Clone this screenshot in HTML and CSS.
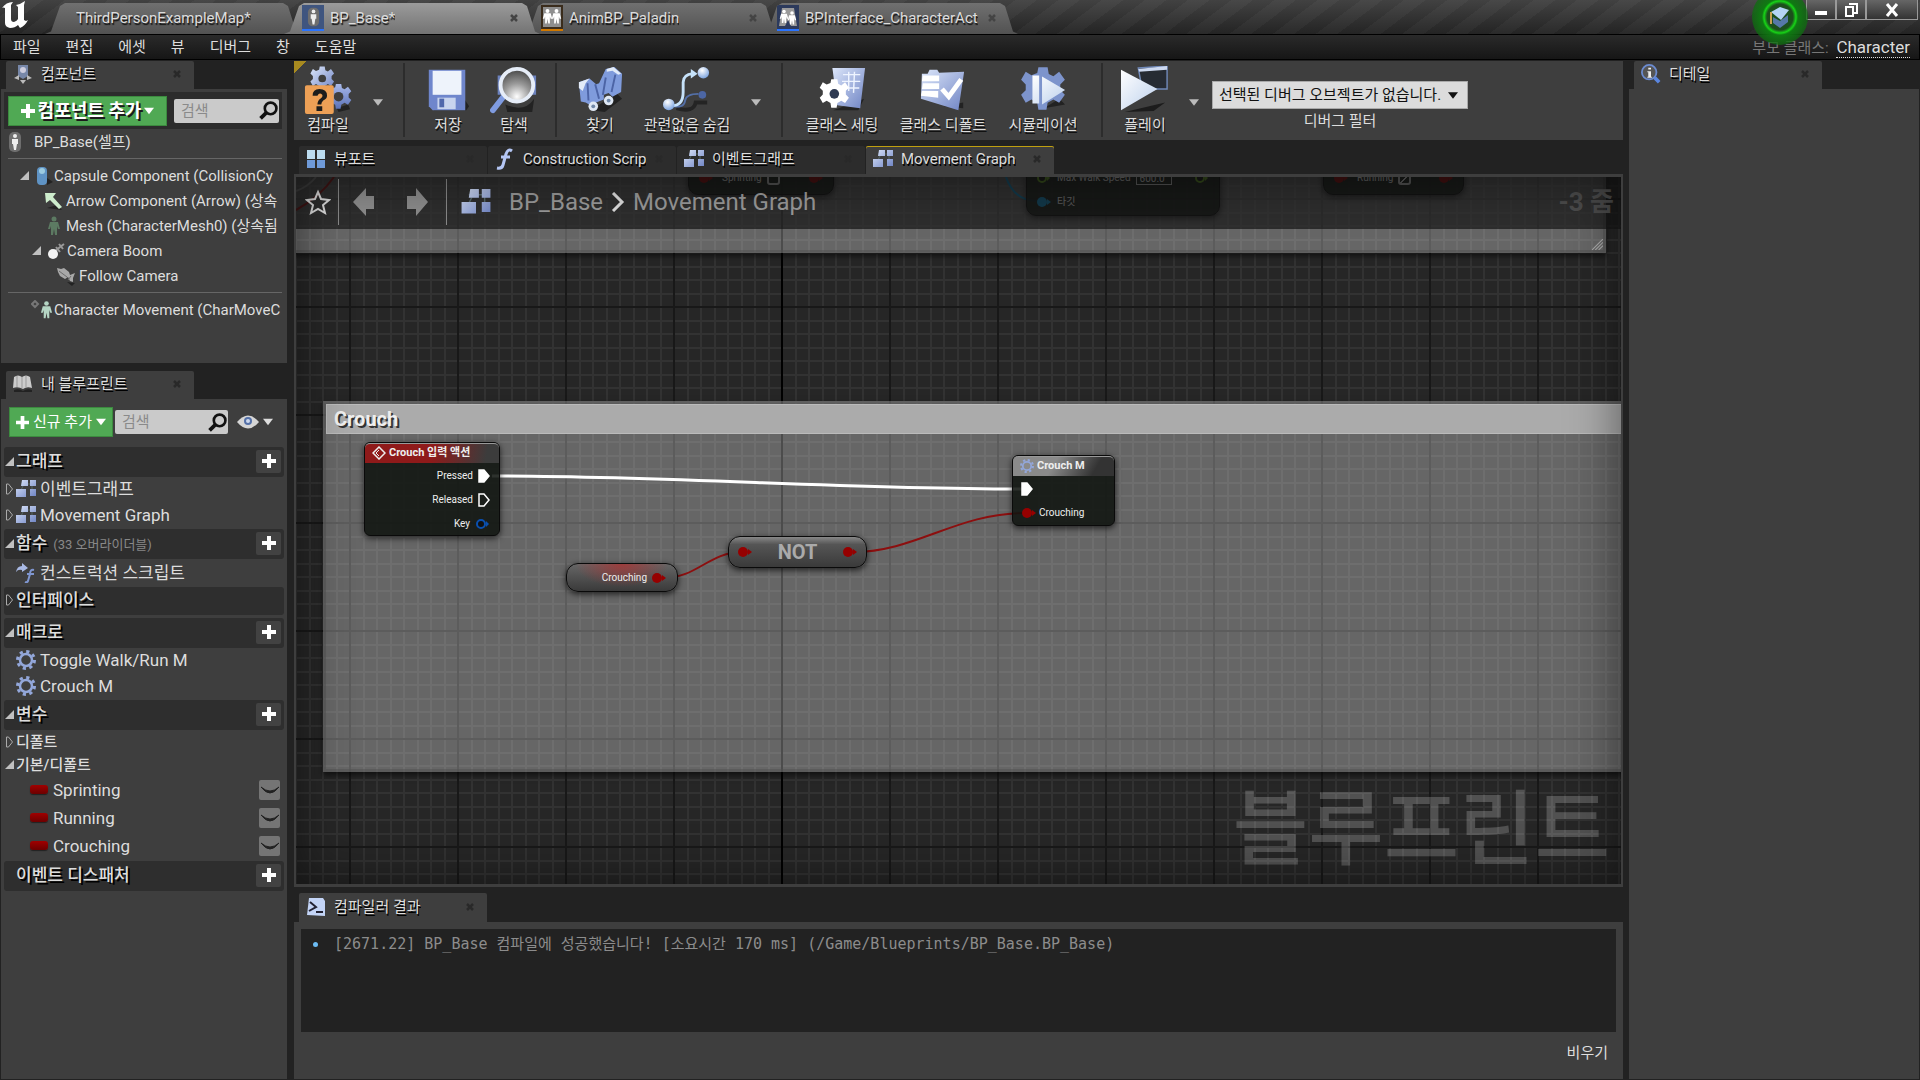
FILE: index.html
```html
<!DOCTYPE html>
<html lang="ko">
<head>
  <meta charset="UTF-8">
  <title>BP_Base</title>
  <link rel="stylesheet" href="styles.css">
</head>
<body>

  <!-- shared icons -->
  <svg class="defs" aria-hidden="true">
    <defs>
      <linearGradient id="blue" x1="0" y1="0" x2="1" y2="1">
        <stop offset="0" stop-color="#dce6fa"/><stop offset="1" stop-color="#6f84c4"/>
      </linearGradient>
      <linearGradient id="blue2" x1="0" y1="0" x2="0" y2="1">
        <stop offset="0" stop-color="#a9baea"/><stop offset="1" stop-color="#5b72b8"/>
      </linearGradient>
      <linearGradient id="white" x1="0" y1="0" x2="1" y2="1">
        <stop offset="0" stop-color="#ffffff"/><stop offset="1" stop-color="#bcd0ec"/>
      </linearGradient>
      <radialGradient id="ball" cx=".4" cy=".3" r=".7">
        <stop offset="0" stop-color="#fff"/><stop offset="1" stop-color="#7fa6e0"/>
      </radialGradient>
      <radialGradient id="lens" cx=".5" cy=".85" r=".9">
        <stop offset="0" stop-color="#fff"/><stop offset=".45" stop-color="#999"/><stop offset="1" stop-color="#3a3a3a"/>
      </radialGradient>
      <symbol id="graph" viewBox="0 0 20 18">
        <path d="M5 4h14M16 4v11M3 14l4-8" stroke="#566" fill="none"/>
        <path d="M6 0h6v6H5zM14 0h6v6h-6zM0 9h10v8H0zM14 9h6v7h-6z" fill="url(#blue)"/>
      </symbol>
      <symbol id="gear" viewBox="0 0 20 20">
        <circle cx="10" cy="10" r="6" fill="none" stroke="#93a7da" stroke-width="2.500"/>
        <circle cx="10" cy="10" r="8.5" fill="none" stroke="#93a7da" stroke-width="3" stroke-dasharray="3.2 3.47"/>
      </symbol>
      <symbol id="cog" viewBox="0 0 40 40">
        <path d="M16 1h8l1 6 4 2 5-4 5 7-4 4v5l4 4-5 7-5-3-5 3-1 6h-7l-1-6-5-3-5 3-4-7 4-4v-5l-4-4 4-7 5 3 5-2z"/>
      </symbol>
      <symbol id="mag" viewBox="0 0 18 18">
        <circle cx="11" cy="7" r="5.5" fill="none" stroke="#111" stroke-width="2.5"/>
        <path d="M7 11l-5.500 5.500" stroke="#111" stroke-width="3.500"/>
      </symbol>
      <symbol id="plus" viewBox="0 0 14 14"><path d="M5 0h4v5h5v4H9v5H5V9H0V5h5z" fill="#fff"/></symbol>
      <symbol id="down" viewBox="0 0 12 8"><path d="M0 0h12L6 8z" fill="currentColor"/></symbol>
      <symbol id="open" viewBox="0 0 10 10"><path d="M10 0v10H0z" fill="#c0c0c0"/></symbol>
      <symbol id="shut" viewBox="0 0 8 12"><path d="M1 1v10l2 0 4-5-4-5z" fill="none" stroke="#aaa"/></symbol>
      <symbol id="close" viewBox="0 0 8 8"><path d="M1 1l6 6M7 1L1 7" stroke="currentColor" stroke-width="2.500"/></symbol>
      <symbol id="man" viewBox="0 0 14 20">
        <circle cx="7" cy="3" r="2.500"/><path d="M3 6h8l2 7h-2l-1-3v9H8l-1-6-1 6H4v-9l-1 3H1z"/>
      </symbol>
      <symbol id="capsule" viewBox="0 0 14 20">
        <rect x="1" width="12" height="20" rx="5" fill="#6e6e6e"/><circle cx="7" cy="4" r="2" fill="#eee"/>
        <path d="M4 7h6v5H9l-1 6H6l-1-6H4z" fill="#eee"/>
      </symbol>
      <symbol id="eye" viewBox="0 0 18 12">
        <path d="M0 3q9 8 18 0-9 12-18 0z" fill="#222" stroke="#222"/>
      </symbol>
      <symbol id="exec" viewBox="0 0 12 14"><path d="M1 1h5l5 6-5 6H1z" stroke="#fff" stroke-width="1.500"/></symbol>
      <symbol id="pin" viewBox="0 0 16 12"><circle cx="6" cy="6" r="5"/><path d="M11 3l4 3-4 3z"/></symbol>
      <symbol id="ring" viewBox="0 0 16 12"><circle cx="6" cy="6" r="4" fill="#111" stroke="currentColor" stroke-width="2"/><path d="M11 3l3 3-3 3z" fill="currentColor"/></symbol>
      <pattern id="grid" width="108" height="108" patternUnits="userSpaceOnUse" x="53" y="21">
        <rect width="108" height="108" fill="#262626"/>
        <path d="M14 0h2v108h-2zM27 0h2v108h-2zM41 0h2v108h-2zM54 0h2v108h-2zM68 0h2v108h-2zM81 0h2v108h-2zM95 0h2v108h-2z
                 M0 14h108v2H0zM0 27h108v2H0zM0 41h108v2H0zM0 54h108v2H0zM0 68h108v2H0zM0 81h108v2H0zM0 95h108v2H0z" fill="#323232"/>
        <path d="M0 0h108v2H0zM0 0h2v108H0z" fill="#181818"/>
      </pattern>
    </defs>
  </svg>

  <header class="titlebar">
    <svg class="logo" viewBox="0 0 26 28"><path d="M0 7Q4 1 11 1L9 4v14q0 3 3 3 3-1 4-3V6L14 4q5-1 9-4l-1 4v15l2 1 2-1q-3 6-8 8l-2-3q-3 3-8 3-5-1-5-5V7q-2-1-3 0z" fill="#fff"/></svg>
    <nav class="file-tabs">
      <button class="file-tab plain"><span>ThirdPersonExampleMap*</span></button>
      <button class="file-tab current">
        <svg width="22" height="26" viewBox="0 0 22 26"><path d="M0 0h22v24H0z" fill="#3f557f"/><path d="M0 24h22v2H0z" fill="#2a74ff"/><use href="#capsule" x="5" y="2" width="13" height="20"/></svg>
        <span>BP_Base*</span><svg class="x"><use href="#close"/></svg>
      </button>
      <button class="file-tab">
        <svg width="22" height="26" viewBox="0 0 22 26"><path d="M0 0h22v24H0z" fill="#3a2c1c"/><path d="M2 2h18v20H2z" fill="#8e8e8e"/><g fill="#fff"><use href="#man" x="1" y="2" width="11" height="19"/><use href="#man" x="10" y="2" width="11" height="19"/></g><path d="M0 24h22v2H0z" fill="#d07800"/></svg>
        <span>AnimBP_Paladin</span><svg class="x"><use href="#close"/></svg>
      </button>
      <button class="file-tab last">
        <svg width="22" height="26" viewBox="0 0 22 26"><path d="M0 0h22v24H0z" fill="#2c3a5c"/><path d="M5 3h12l3 18h-6l-3-6-3 6H2z" fill="#9a9a9a"/><g fill="#fff"><use href="#man" x="2" y="2" width="10" height="19"/><use href="#man" x="10" y="4" width="10" height="18"/></g><path d="M0 24h22v2H0z" fill="#2a74ff"/></svg>
        <span>BPInterface_CharacterAct</span><svg class="x"><use href="#close"/></svg>
      </button>
    </nav>
    <button class="tutorial" aria-label="튜토리얼">
      <svg viewBox="0 0 24 24"><path d="M5 12l7 4 8-6v7l-8 6-7-5z" fill="#5678a8"/><path d="M3 7l9-5 9 3-8 10z" fill="#b4d4f4"/><path d="M3 7v12" stroke="#c8a050" stroke-width="2"/></svg>
    </button>
    <div class="window-buttons">
      <button aria-label="최소화"><svg viewBox="0 0 14 14"><path d="M1 8h12v4H1z" fill="#fff"/></svg></button>
      <button aria-label="복원"><svg viewBox="0 0 14 14"><path d="M5 1h8v9h-3M2 4h7v9H2z" fill="none" stroke="#fff" stroke-width="2"/></svg></button>
      <button class="wide" aria-label="닫기"><svg viewBox="0 0 14 14"><path d="M2 1l10 12M12 1L2 13" stroke="#fff" stroke-width="3"/></svg></button>
    </div>
  </header>

  <div class="menubar">
    <button>파일</button><button>편집</button><button>에셋</button><button>뷰</button><button>디버그</button><button>창</button><button>도움말</button>
    <p class="parent">부모 클래스: <a href="#">Character</a></p>
  </div>

  <div class="workspace">
    <aside class="left">
      <button class="dock-tab">
        <svg width="20" height="20" viewBox="0 0 20 20"><path d="M5 1h10v11l-5 3-5-3z" fill="#7787a8"/><circle cx="10" cy="6" r="3" fill="#ccd"/><path d="M1 14l5-3v5zM19 14l-5-3v5zM10 20l-3-4h6z" fill="#bbb"/></svg>
        <span>컴포넌트</span><svg class="x"><use href="#close"/></svg>
      </button>
      <section class="panel components">
        <div class="add-row">
          <button class="green big"><svg width="14" height="14"><use href="#plus"/></svg>컴포넌트 추가<svg width="10" height="8"><use href="#down"/></svg></button>
          <label class="search"><input type="text" placeholder="검색" aria-label="컴포넌트 검색"><svg><use href="#mag"/></svg></label>
        </div>
        <div class="comp self"><svg width="14" height="20"><use href="#capsule"/></svg><span>BP_Base(셀프)</span></div>
        <hr>
        <div class="comp d1"><svg class="tri"><use href="#open"/></svg><svg width="18" height="20" viewBox="0 0 18 20"><path d="M12 12l6 4-6 3z" fill="#222"/><rect x="2" y="1" width="10" height="18" rx="4" fill="#5f93c4"/><circle cx="7" cy="5" r="3" fill="#9ccbe0"/></svg><span>Capsule Component (CollisionCy</span></div>
        <div class="comp d2"><svg width="20" height="20" viewBox="0 0 20 20"><path d="M3 17l15 2-5-5z" fill="#222"/><path d="M1 2h11L9 6l9 10-3 2-9-9-4 3z" fill="#cdeccc"/></svg><span>Arrow Component (Arrow) (상속</span></div>
        <div class="comp d2"><svg width="20" height="20" viewBox="0 0 20 20" fill="#5c7a62"><use href="#man" x="3" width="14" height="20"/></svg><span>Mesh (CharacterMesh0) (상속됨</span></div>
        <div class="comp d3"><svg class="tri"><use href="#open"/></svg><svg width="20" height="20" viewBox="0 0 20 20"><path d="M8 10l9-7M9 6l4 5M12 3l4 5" stroke="#999" stroke-width="2"/><circle cx="6" cy="13" r="5" fill="#f2f2f2"/></svg><span>Camera Boom</span></div>
        <div class="comp d4"><svg width="20" height="20" viewBox="0 0 20 20"><path d="M11 16l8 1-3 3z" fill="#222"/><path d="M1 2l4 1 3-1 5 4 1 3 5-2-2 5v4l-3-1-2-4-3 2-5-3-2-4z" fill="#a8a8a8"/><path d="M3 5l8 6M12 14l3-4" stroke="#6c6c6c"/></svg><span>Follow Camera</span></div>
        <hr>
        <div class="comp d5"><svg width="22" height="20" viewBox="0 0 22 20"><path d="M4 1l3 3-3 3-3-3z" fill="none" stroke="#777" stroke-width="2"/><g fill="#b5d5c4"><use href="#man" x="9" width="13" height="20"/></g></svg><span>Character Movement (CharMoveC</span></div>
      </section>

      <button class="dock-tab">
        <svg width="20" height="20" viewBox="0 0 20 20"><path d="M1 3q4-3 8 0 4-3 8 0l2 11q-5-2-9 1-5-3-10-1z" fill="#ccc"/><path d="M9 3v11M4 2v11M13 2v11" stroke="#999"/><path d="M1 16q5-2 9 1 4-3 9-1v2H1z" fill="#222"/></svg>
        <span>내 블루프린트</span><svg class="x"><use href="#close"/></svg>
      </button>
      <section class="panel blueprint">
        <div class="bp-tools">
          <button class="green"><svg width="13" height="13"><use href="#plus"/></svg>신규 추가<svg width="10" height="8"><use href="#down"/></svg></button>
          <label class="search"><input type="text" placeholder="검색" aria-label="블루프린트 검색"><svg><use href="#mag"/></svg></label>
          <button class="view" aria-label="보기 옵션"><svg width="22" height="14" viewBox="0 0 22 14"><path d="M0 7q11-13 22 0-11 13-22 0z" fill="#d5d5d5"/><circle cx="11" cy="6" r="4" fill="#5470a8"/><circle cx="11" cy="6" r="2" fill="#ccd8ee"/></svg><svg width="10" height="8"><use href="#down"/></svg></button>
        </div>
        <h3><svg class="tri"><use href="#open"/></svg>그래프<button aria-label="그래프 추가"><svg><use href="#plus"/></svg></button></h3>
        <div class="item"><svg class="arrow"><use href="#shut"/></svg><svg width="20" height="18"><use href="#graph"/></svg>이벤트그래프</div>
        <div class="item"><svg class="arrow"><use href="#shut"/></svg><svg width="20" height="18"><use href="#graph"/></svg>Movement Graph</div>
        <h3><svg class="tri"><use href="#open"/></svg>함수<small>(33 오버라이더블)</small><button aria-label="함수 추가"><svg><use href="#plus"/></svg></button></h3>
        <div class="item tall"><svg class="arrow"></svg><svg width="20" height="20" viewBox="0 0 20 20"><path d="M0 9q1-6 6-6V0l6 5-6 4V7q-4-1-6 2z" fill="#a9b9e4"/><path d="M18 7q-4-1-4 4l-2 7q-1 2-3 1M11 11h7" fill="none" stroke="#7f96d0" stroke-width="2"/></svg>컨스트럭션 스크립트</div>
        <h3 class="short"><svg class="arrow"><use href="#shut"/></svg>인터페이스</h3>
        <h3><svg class="tri"><use href="#open"/></svg>매크로<button aria-label="매크로 추가"><svg><use href="#plus"/></svg></button></h3>
        <div class="item"><svg class="arrow"></svg><svg width="20" height="20"><use href="#gear"/></svg>Toggle Walk/Run M</div>
        <div class="item"><svg class="arrow"></svg><svg width="20" height="20"><use href="#gear"/></svg>Crouch M</div>
        <h3><svg class="tri"><use href="#open"/></svg>변수<button aria-label="변수 추가"><svg><use href="#plus"/></svg></button></h3>
        <h4><svg class="arrow"><use href="#shut"/></svg>디폴트</h4>
        <h4><svg class="tri"><use href="#open"/></svg>기본/디폴트</h4>
        <div class="var"><i></i>Sprinting<button aria-label="Sprinting 공개"><svg><use href="#eye"/></svg></button></div>
        <div class="var"><i></i>Running<button aria-label="Running 공개"><svg><use href="#eye"/></svg></button></div>
        <div class="var"><i></i>Crouching<button aria-label="Crouching 공개"><svg><use href="#eye"/></svg></button></div>
        <h3><svg class="tri"></svg>이벤트 디스패처<button aria-label="디스패처 추가"><svg><use href="#plus"/></svg></button></h3>
      </section>
    </aside>

    <main class="center">
      <div class="toolbar">
        <button class="tool compile">
          <svg viewBox="0 0 50 50"><path d="M34 44l12-4 2 5-12 3z" fill="#222"/><use href="#cog" x="6" y="0" width="26" height="26" fill="url(#blue)"/><circle cx="19" cy="13" r="4" fill="#3e3e3e"/><use href="#cog" x="22" y="17" width="28" height="30" fill="url(#blue2)"/><circle cx="36" cy="32" r="5" fill="#3e3e3e"/><rect x="1" y="20" width="30" height="30" rx="2" fill="#eda056"/><path d="M9 31q0-7 7-7 8 0 8 7 0 3-4 5-2 2-2 4h-4q0-4 3-6 3-2 2-4-3-3-5 1zM13 42h6v5h-6z" fill="#1c1c1c"/></svg>
          컴파일
        </button>
        <button class="more" aria-label="컴파일 옵션"><svg><use href="#down"/></svg></button>
        <span class="sep"></span>
        <button class="tool w68">
          <svg viewBox="0 0 50 50"><path d="M10 46h34l3-4-4-6z" fill="#222"/><path d="M5 4h38v42H9l-4-4z" fill="#6f86cc"/><path d="M9 5h30v25H9z" fill="#eef3fb"/><path d="M14 33h19v12H14z" fill="#c8d4ee"/><path d="M16 34h5v9h-5z" fill="#5068ac"/></svg>
          저장
        </button>
        <button class="tool w62">
          <svg viewBox="0 0 50 50"><path d="M16 40q20 9 30-6l-2 14H18z" fill="#222"/><path d="M8 10h10v20H8zM40 10h8v20h-8z" fill="#6c82be"/><path d="M14 32L3 46" stroke="#7f9be0" stroke-width="6" stroke-linecap="round"/><circle cx="28" cy="20" r="17" fill="url(#lens)" stroke="#e6edf8" stroke-width="4"/></svg>
          탐색
        </button>
        <span class="sep"></span>
        <button class="tool w68">
          <svg viewBox="0 0 50 50"><path d="M16 46l14 2 18-14-6-6z" fill="#222"/><path d="M3 17l11-4 7 6 3-1 7-15 9-2 8 7-1 19-9 5-4-4-5 2 0 5-8 3-6 3-5-3-5-1z" fill="#7f9bdc"/><path d="M32 3l7-2 8 7-3 1-6-4-6 1zM3 17l11-4-4 5-3 8-4-3z" fill="#e2ebf8"/><path d="M20 19l4 15M31 12l-3 18M41 9l-4 18M12 18l1 18" stroke="#4c64a6" stroke-width="2"/><circle cx="18" cy="42" r="5" fill="#dfe8f4"/><circle cx="18" cy="42" r="2" fill="#7088a8"/><circle cx="34" cy="36" r="5" fill="#dfe8f4"/><circle cx="34" cy="36" r="2" fill="#7088a8"/></svg>
          찾기
        </button>
        <button class="tool w106">
          <svg viewBox="0 0 50 50"><path d="M14 44q18 5 20-6h12" stroke="#242424" stroke-width="4" fill="none"/><path d="M7 41q15 4 16-5 1-7 14-7" stroke="#5470a8" stroke-width="2" fill="none"/><path d="M7 41q14 2 14-14V17q0-8 10-9" stroke="#c6e2fa" stroke-width="3" fill="none"/><path d="M29 3l7 5-7 5z" fill="#c6e2fa"/><circle cx="42" cy="7" r="6" fill="url(#ball)"/><circle cx="6" cy="40" r="6" fill="url(#ball)"/><circle cx="41" cy="30" r="4" fill="#4c66a4"/></svg>
          관련없음 숨김
        </button>
        <button class="more" aria-label="숨김 옵션"><svg><use href="#down"/></svg></button>
        <span class="sep"></span>
        <button class="tool w100">
          <svg viewBox="0 0 50 50"><path d="M16 46h26l6-12z" fill="#222"/><path d="M15 2h34l-5 42-24-3z" fill="url(#blue)"/><path d="M26 9h18M25 16h19M25 23h18M32 6v20M38 6l-1 22" stroke="#eef4ff" stroke-width="1.500"/><use href="#cog" x="0" y="13" width="34" height="32" fill="#fff"/><circle cx="17" cy="29" r="5" fill="#2e3a52"/></svg>
          클래스 세팅
        </button>
        <button class="tool w102">
          <svg viewBox="0 0 50 50"><path d="M26 42l20-4 0 6z" fill="#222"/><path d="M3 8h6l2-4h8l2 3 26-1-6 40L2 34z" fill="url(#blue)"/><path d="M4 10h17v6H3zM4 18h17v6H3zM3 26h17v7L2 31z" fill="#fff"/><path d="M24 24l7 8 13-18" stroke="#fff" stroke-width="5" fill="none"/></svg>
          클래스 디폴트
        </button>
        <button class="tool w98">
          <svg viewBox="0 0 50 50"><path d="M26 44l22-4-6-6z" fill="#222"/><use href="#cog" x="1" y="0" width="48" height="48" fill="#7d94cc"/><path d="M14 10h7v29h-7zM24 11l24 14-24 15z" fill="url(#white)"/></svg>
          시뮬레이션
        </button>
        <span class="sep"></span>
        <button class="tool w66">
          <svg viewBox="0 0 50 50"><path d="M4 48l42-10-12 9z" fill="#1c1c1c"/><path d="M18 2l30-2v24H22z" fill="#262b33" stroke="#6f88b8" stroke-width="1.500"/><path d="M18 3l30-3v4l-29 2z" fill="#cdd9f0"/><path d="M0 4l38 20L0 46z" fill="url(#white)"/></svg>
          플레이
        </button>
        <button class="more" aria-label="플레이 옵션"><svg><use href="#down"/></svg></button>
        <div class="debug">
          <label class="combo">
            <select id="debugTarget"><option>선택된 디버그 오브젝트가 없습니다.</option></select>
            <svg><use href="#down"/></svg>
          </label>
          <label for="debugTarget">디버그 필터</label>
        </div>
      </div>

      <nav class="graph-tabs">
        <button class="dock-tab dim"><svg width="20" height="20" viewBox="0 0 20 20"><path d="M1 1h8v9H1zM11 1h8v9h-8z" fill="#bcdcf0"/><path d="M1 11h8v8H1zM11 11h8v8h-8z" fill="#6f9ad8"/></svg><span>뷰포트</span><svg class="x"><use href="#close"/></svg></button>
        <button class="dock-tab dim"><svg width="20" height="22" viewBox="0 0 20 22"><path d="M17 3q-4-3-6 3L8 17q-1 4-6 3M6 9h9" fill="none" stroke="#b4c6f4" stroke-width="3"/></svg><span>Construction Scrip</span><svg class="x"><use href="#close"/></svg></button>
        <button class="dock-tab dim"><svg width="20" height="18"><use href="#graph"/></svg><span>이벤트그래프</span><svg class="x"><use href="#close"/></svg></button>
        <button class="dock-tab selected"><svg width="20" height="18"><use href="#graph"/></svg><span>Movement Graph</span><svg class="x"><use href="#close"/></svg></button>
      </nav>

      <section class="graph">
        <svg class="layer" aria-hidden="true"><rect width="100%" height="100%" fill="url(#grid)"/><path d="M485 0h2v2000h-2z" fill="#000"/></svg>

        <div class="comment upper"><svg viewBox="0 0 10 10"><path d="M0 10L10 0M3 10l7-7M6 10l4-4" stroke="#aaa"/></svg></div>
        <div class="comment crouch"><h2>Crouch</h2></div>
        <div class="watermark">블루프린트</div>

        <svg class="layer" aria-hidden="true">
          <g fill="none">
            <path d="M0 14Q12 10 20 0" stroke="#999" stroke-width="2"/>
            <path d="M0 33Q24 20 38 0" stroke="#a01010" stroke-width="2"/>
            <path d="M710 0Q718 24 742 24" stroke="#0a88c0" stroke-width="2"/>
            <path d="M196 299C380 299 540 312 726 312" stroke="#fff" stroke-width="3"/>
            <path d="M367 401C402 401 412 375 447 375" stroke="#8c0f0f" stroke-width="2"/>
            <path d="M557 375C620 375 660 336 730 336" stroke="#8c0f0f" stroke-width="2"/>
          </g>
        </svg>

        <div class="node cut sprint"><svg class="red"><use href="#pin"/></svg><label>Sprinting <input type="checkbox"></label><svg class="red end"><use href="#pin"/></svg></div>
        <div class="node cut speed">
          <div><svg class="lime"><use href="#ring"/></svg><label>Max Walk Speed <input type="text" value="600.0"></label><svg class="lime end"><use href="#ring"/></svg></div>
          <div><svg class="cyan"><use href="#pin"/></svg>타깃</div>
        </div>
        <div class="node cut run"><svg class="red"><use href="#pin"/></svg><label>Running <input type="checkbox" checked></label><svg class="red end"><use href="#pin"/></svg></div>

        <div class="node action">
          <h5><svg width="14" height="14" viewBox="0 0 14 14"><path d="M7 1l6 6-6 6-6-6z" fill="none" stroke="#eee" stroke-width="1.500"/><path d="M7 4l-3 3 3 3" fill="none" stroke="#eee"/></svg>Crouch 입력 액션</h5>
          <div>Pressed<svg class="exec" fill="#fff"><use href="#exec"/></svg></div>
          <div>Released<svg class="exec" fill="none"><use href="#exec"/></svg></div>
          <div>Key<svg class="key"><use href="#ring"/></svg></div>
        </div>
        <div class="node pill getter">Crouching<svg class="red"><use href="#pin"/></svg></div>
        <div class="node pill not"><svg class="red"><use href="#pin"/></svg><b>NOT</b><svg class="red"><use href="#pin"/></svg></div>
        <div class="node macro">
          <h5><svg width="15" height="15"><use href="#gear"/></svg>Crouch M</h5>
          <div><svg class="exec" fill="#fff"><use href="#exec"/></svg></div>
          <div><svg class="red"><use href="#pin"/></svg>Crouching</div>
        </div>

        <div class="crumbs">
          <button aria-label="즐겨찾기"><svg width="26" height="26" viewBox="0 0 26 26"><path d="M13 3l3 7 8 1-6 5 2 8-7-4-7 4 2-8-6-5 8-1z" fill="none" stroke="#ddd" stroke-width="2"/></svg></button>
          <span class="line"></span>
          <button aria-label="뒤로"><svg width="22" height="30" viewBox="0 0 22 30"><path d="M0 15L13 1v8h8v13h-8v7z" fill="#8b8b8b"/></svg></button>
          <button aria-label="앞으로"><svg width="22" height="30" viewBox="0 0 22 30"><path d="M22 15L10 1v8H1v13h9v7z" fill="#8b8b8b"/></svg></button>
          <span class="line"></span>
          <svg width="30" height="26"><use href="#graph"/></svg>
          <a href="#">BP_Base</a>
          <svg width="14" height="20" viewBox="0 0 14 20"><path d="M2 1l9 9-9 9" fill="none" stroke="#ddd" stroke-width="3"/></svg>
          <a href="#">Movement Graph</a>
          <strong>-3 줌</strong>
        </div>
      </section>

      <button class="dock-tab results"><svg width="20" height="20" viewBox="0 0 20 20"><path d="M3 1h14l2 3v15l-18-1z" fill="#c3d4f6"/><path d="M4 5l6 5-7 4M10 15h7" fill="none" stroke="#223" stroke-width="2"/></svg><span>컴파일러 결과</span><svg class="x"><use href="#close"/></svg></button>
      <section class="panel output">
        <ul class="log"><li>[2671.22] BP_Base 컴파일에 성공했습니다! [소요시간 170 ms] (/Game/Blueprints/BP_Base.BP_Base)</li></ul>
        <button class="clear">비우기</button>
      </section>
    </main>

    <aside class="right">
      <button class="dock-tab"><svg width="20" height="20" viewBox="0 0 22 22"><path d="M15 15l5 5" stroke="#5a86e0" stroke-width="4"/><circle cx="9" cy="9" r="8" fill="#555" stroke="#6b8bd0" stroke-width="2"/><path d="M8 4h3v2H8zM7 8h4v6h1v1H7v-1h1V9H7z" fill="#eee"/></svg><span>디테일</span><svg class="x"><use href="#close"/></svg></button>
      <section class="panel details"></section>
    </aside>
  </div>

</body>
</html>
```

FILE: styles.css
```css
* {
  box-sizing: border-box;
}
body {
  margin: 0;
  height: 100vh;
  display: flex;
  flex-direction: column;
  overflow: hidden;
  background: #222;
  color: #ddd;
  font: 15px Roboto, "Noto Sans CJK KR", sans-serif;
  line-height: 20px;
}
button {
  background: none;
  border: 0;
  padding: 0;
  color: inherit;
  font: inherit;
}
h2, h3, h4, h5, p, ul {
  margin: 0;
  padding: 0;
}
svg {
  flex: none;
}
.defs {
  position: absolute;
  width: 0;
  height: 0;
}
.x {
  width: 8px;
  height: 8px;
  margin-left: auto;
  color: #292929;
}
.tri {
  width: 9px;
  height: 9px;
}
.arrow {
  width: 9px;
  height: 12px;
}

/* title bar */
.titlebar {
  position: relative;
  display: flex;
  align-items: flex-start;
  height: 34px;
  flex: none;
  background:
    linear-gradient(rgba(80,80,80,.6), rgba(30,30,30,.6)),
    repeating-linear-gradient(143deg, #2c2c2c 0 13px, #3c3c3c 13px 26px);
}
.logo {
  width: 26px;
  height: 28px;
  margin: 1px 17px 0 2px;
}
.file-tabs {
  display: flex;
  padding-top: 3px;
}
.file-tab {
  display: flex;
  align-items: center;
  gap: 6px;
  width: 256px;
  height: 31px;
  margin-right: -17px;
  padding: 0 22px 2px 18px;
  background: linear-gradient(#707070, #525252);
  clip-path: polygon(0 100%, 6px 92%, 15px 10%, 20px 0, 238px 0, 243px 10%, 251px 92%, 100% 100%);
  text-shadow: 1px 2px 1px #111;
}
.file-tab.plain {
  padding-left: 31px;
}
.file-tab.last {
  padding-left: 15px;
}
.file-tab.current {
  z-index: 1;
  background: linear-gradient(#9b9b9b, #737373);
}
.file-tab span {
  overflow: hidden;
  white-space: nowrap;
}
.file-tab .x {
  color: #444;
}
.tutorial {
  position: absolute;
  right: 112px;
  top: -11px;
  z-index: 2;
  display: grid;
  place-items: center;
  width: 56px;
  height: 56px;
  border-radius: 50%;
  background: radial-gradient(circle, #1c4f1c 0 13px, #17d417 16px, #0f7a12 18px, rgba(14,110,16,.75) 27px);
}
.tutorial svg {
  width: 24px;
}
.window-buttons {
  display: flex;
  margin: 0 2px 0 auto;
}
.window-buttons button {
  display: grid;
  place-items: center;
  width: 30px;
  height: 20px;
  border: 1px solid #999;
  border-top: 0;
  background: linear-gradient(#666, #333);
}
.window-buttons .wide {
  width: 52px;
}
.window-buttons svg {
  width: 14px;
}

/* menu */
.menubar {
  display: flex;
  align-items: center;
  gap: 25px;
  flex: none;
  height: 26px;
  padding: 0 9px 0 12px;
  border: 1px solid #000;
  background: linear-gradient(#2a2a2a, #161616);
}
.parent {
  margin-left: auto;
  color: #777;
}
.parent a {
  margin-left: 4px;
  color: #ddd;
  font-size: 17px;
  text-decoration: none;
  border-bottom: 1px dotted #ddd;
}

.workspace {
  display: flex;
  flex: 1;
  min-height: 0;
  padding: 1px;
}
.left {
  display: flex;
  flex-direction: column;
  width: 286px;
  margin-right: 7px;
}
.center {
  display: flex;
  flex: 1;
  flex-direction: column;
  min-width: 0;
}
.right {
  display: flex;
  flex-direction: column;
  width: 290px;
  margin-left: 6px;
}
.panel {
  background: #3e3e3e;
}
.dock-tab {
  display: flex;
  align-items: center;
  gap: 8px;
  flex: none;
  width: 188px;
  height: 28px;
  margin-left: 5px;
  padding: 0 13px 2px 7px;
  border-radius: 2px 2px 0 0;
  background: #3e3e3e;
  text-shadow: 1px 2px 0 #000;
  text-align: left;
}
.dock-tab span {
  overflow: hidden;
  white-space: nowrap;
}
.details {
  flex: 1;
}

/* components */
.components {
  height: 274px;
  margin-bottom: 8px;
  padding: 3px 5px 0 3px;
  overflow: hidden;
}
.add-row {
  display: flex;
  align-items: center;
  gap: 7px;
  height: 37px;
  padding: 0 3px 0 4px;
  background: #2c2c2c;
}
.green {
  display: flex;
  align-items: center;
  justify-content: center;
  gap: 4px;
  flex: none;
  width: 104px;
  height: 30px;
  border: 1px solid #3c8a3f;
  background: #50a954;
  color: #fff;
  font-size: 15px;
}
.green.big {
  width: 159px;
  gap: 3px;
  font-size: 18px;
  font-weight: bold;
  text-shadow: 2px 2px 0 #1c1c1c;
}
.search {
  display: flex;
  align-items: center;
  flex: 1;
  min-width: 0;
  height: 24px;
  padding: 0 1px 0 7px;
  border-radius: 2px;
  background: #cacaca;
}
.search input {
  flex: 1;
  width: 0;
  min-width: 0;
  padding: 0;
  border: 0;
  background: none;
  font: 15px Roboto, "Noto Sans CJK KR", sans-serif;
}
.search input::placeholder {
  color: #8a8a8a;
}
.search svg {
  width: 19px;
  height: 19px;
}
.comp {
  display: flex;
  align-items: center;
  height: 25px;
  overflow: hidden;
  white-space: nowrap;
}
.comp .tri {
  margin-right: 6px;
}
.self {
  gap: 12px;
  padding-left: 4px;
}
.d1 {
  padding-left: 16px;
}
.d1 svg + svg {
  margin-right: 1px;
}
.d2 {
  gap: 2px;
  padding-left: 40px;
}
.d3 {
  padding-left: 28px;
}
.d4 {
  gap: 3px;
  padding-left: 52px;
}
.d5 {
  gap: 1px;
  padding-left: 27px;
}
.components hr {
  height: 1px;
  margin: 4px 0 4px 4px;
  border: 0;
  background: #666;
}

/* my blueprint */
.blueprint {
  flex: 1;
  padding: 8px 3px 0;
  font-size: 17px;
}
.bp-tools {
  display: flex;
  align-items: center;
  gap: 2px;
  margin-bottom: 10px;
  padding-left: 5px;
}
.view {
  display: flex;
  align-items: center;
  gap: 4px;
  padding: 0 11px 0 7px;
}
.blueprint h3 {
  display: flex;
  align-items: center;
  gap: 2px;
  height: 30px;
  padding: 0 3px 2px 1px;
  border-radius: 3px;
  background: #2e2e2e;
  font-size: 17px;
  font-weight: 500;
  text-shadow: 2px 2px 0 #000;
}
.blueprint h3.short {
  height: 28px;
  margin-bottom: 3px;
}
.blueprint small {
  margin: 4px 0 0 4px;
  color: #888;
  font-size: 13px;
  font-weight: normal;
  text-shadow: none;
}
.blueprint h3 button {
  display: grid;
  place-items: center;
  width: 25px;
  height: 23px;
  margin-left: auto;
  border-radius: 2px;
  background: #424242;
}
.blueprint h3 button svg {
  width: 14px;
  height: 14px;
}
.blueprint h4 {
  display: flex;
  align-items: center;
  gap: 2px;
  height: 23px;
  padding-left: 1px;
  font-size: 15px;
  font-weight: 500;
}
.item {
  display: flex;
  align-items: center;
  height: 26px;
  padding: 0 0 3px 1px;
}
.item .arrow {
  margin-right: 2px;
}
.item svg + svg {
  margin-right: 4px;
}
.item.tall {
  height: 28px;
  padding-bottom: 1px;
}
.var {
  display: flex;
  align-items: center;
  height: 28px;
  padding: 0 4px 1px 26px;
}
.var i {
  width: 18px;
  height: 9px;
  margin-right: 5px;
  border-radius: 3px;
  background: linear-gradient(#a00000, #6c0000);
  box-shadow: 0 1px 1px #222;
}
.var button {
  display: grid;
  place-items: center;
  width: 21px;
  height: 20px;
  margin-left: auto;
  border-radius: 2px;
  background: #757575;
}
.var button svg {
  width: 18px;
  height: 12px;
}
.var:last-of-type {
  margin-bottom: 1px;
}

/* toolbar */
.toolbar {
  display: flex;
  flex: none;
  height: 79px;
  background: linear-gradient(135deg, #a88a20 9px, #3e3e3e 9px);
}
.tool {
  display: flex;
  flex-direction: column;
  align-items: center;
  padding-top: 5px;
  text-shadow: 1px 2px 0 #111;
  white-space: nowrap;
}
.tool svg {
  width: 48px;
  height: 48px;
  margin-bottom: 1px;
}
.compile, .w68 {
  width: 68px;
}
.w62 {
  width: 64px;
}
.w66 {
  width: 66px;
}
.w98 {
  width: 98px;
}
.w100 {
  width: 100px;
}
.w102 {
  width: 102px;
}
.w106 {
  width: 106px;
}
.more {
  width: 32px;
  color: #bbb;
}
.more svg {
  width: 10px;
  height: 7px;
}
.sep {
  width: 2px;
  margin: 2px 9px 3px;
  background: #2c2c2c;
}
.debug {
  display: flex;
  flex-direction: column;
  align-items: center;
  gap: 2px;
  padding: 20px 0 0 2px;
}
.combo {
  display: flex;
  align-items: center;
  width: 256px;
  height: 28px;
  padding: 0 9px 0 6px;
  border: 1px solid #aaa;
  background: #dcdcdc;
  color: #111;
}
.combo select {
  flex: 1;
  min-width: 0;
  padding: 0;
  border: 0;
  appearance: none;
  background: none;
  color: #111;
  font: 15px Roboto, "Noto Sans CJK KR", sans-serif;
}
.combo svg {
  width: 10px;
  height: 7px;
}

/* graph */
.graph-tabs {
  display: flex;
  gap: 1px;
  margin-top: 6px;
  padding-left: 5px;
}
.graph-tabs .dock-tab {
  margin: 0;
}
.dock-tab.dim {
  background: #2c2c2c;
}
.dock-tab.selected {
  box-shadow: inset 0 1px 0 #c0a010;
}
.graph {
  position: relative;
  flex: 1;
  min-height: 0;
  overflow: hidden;
  border: solid #3e3e3e;
  border-width: 3px 2px;
  color: #eee;
}
.graph::after {
  content: "";
  position: absolute;
  inset: 0;
  box-shadow: inset 0 0 50px rgba(0,0,0,.5);
  pointer-events: none;
}
.layer {
  position: absolute;
  inset: 0;
  width: 100%;
  height: 100%;
}
.comment {
  position: absolute;
  background: rgba(245,245,245,.31);
  border: 3px solid rgba(80,80,80,.5);
  box-shadow: 0 3px 6px rgba(0,0,0,.6);
}
.upper {
  left: -10px;
  right: 15px;
  top: -20px;
  height: 96px;
}
.upper svg {
  position: absolute;
  right: 0;
  bottom: 0;
  width: 11px;
  height: 11px;
}
.crouch {
  left: 27px;
  right: -20px;
  top: 224px;
  height: 371px;
}
.crouch h2 {
  height: 30px;
  padding-left: 7px;
  border: 1px solid #bbb;
  background: #ababab;
  font-size: 20px;
  font-weight: bold;
  line-height: 28px;
  text-shadow: 2px 2px 0 #333;
}
.watermark {
  position: absolute;
  right: 11px;
  bottom: 6px;
  color: rgba(255,255,255,.2);
  font-size: 82px;
  font-weight: 500;
  line-height: 96px;
}
.node {
  position: absolute;
  border: 1px solid #0a0a0a;
  border-radius: 6px;
  background: rgba(16,20,16,.88);
  box-shadow: 0 2px 6px rgba(0,0,0,.7);
  font-size: 10px;
}
.node > div {
  display: flex;
  align-items: center;
  height: 24px;
}
.node svg {
  width: 16px;
  height: 12px;
}
.node .exec {
  width: 12px;
  height: 14px;
}
.red {
  fill: #960000;
}
.lime {
  color: #6aa820;
}
.cyan {
  fill: #0a88c0;
}
.key {
  color: #0a50b0;
}
.node h5 {
  display: flex;
  align-items: center;
  gap: 3px;
  height: 20px;
  margin-bottom: 1px;
  padding: 0 0 2px 7px;
  border-top: 1px solid #999;
  border-radius: 5px 5px 0 0;
  font-size: 11px;
  line-height: 17px;
}
.node h5 svg {
  width: 14px;
  height: 14px;
}
.action {
  left: 68px;
  top: 265px;
  width: 136px;
  height: 94px;
}
.action h5 {
  background: linear-gradient(100deg, #8f1a1a 50%, #3c3c3c 90%);
}
.action > div {
  justify-content: flex-end;
  gap: 5px;
  padding-right: 9px;
}
.action .key {
  margin-right: -1px;
}
.macro {
  left: 716px;
  top: 278px;
  width: 103px;
  height: 71px;
}
.macro h5 {
  background: linear-gradient(120deg, #8a8a8a 40%, #333 80%);
}
.macro > div {
  gap: 2px;
  padding-left: 8px;
}
.pill {
  display: flex;
  align-items: center;
  border-radius: 12px;
  background: linear-gradient(#888, #555 25%, #3a3a3a);
}
.getter {
  left: 270px;
  top: 386px;
  width: 112px;
  height: 29px;
  justify-content: flex-end;
  gap: 4px;
  padding-right: 10px;
  background: radial-gradient(ellipse at 50% 0, rgba(170,50,50,.8), transparent 60%), linear-gradient(#666, #3a3a3a);
}
.not {
  left: 432px;
  top: 359px;
  width: 139px;
  height: 32px;
  justify-content: space-between;
  padding: 0 8px;
}
.not b {
  color: #aaa;
  font-size: 20px;
}
.cut {
  display: flex;
  align-items: center;
  gap: 8px;
  padding: 0 9px;
  border-radius: 10px;
}
.cut label {
  display: flex;
  align-items: center;
  gap: 5px;
}
.cut input {
  margin: 0;
  appearance: none;
  border: 1px solid #ccc;
  background: none;
  color: #eee;
  font: 10px Roboto, sans-serif;
}
.cut input[type="checkbox"] {
  width: 13px;
  height: 13px;
  border-width: 2px;
  border-radius: 3px;
}
.cut input:checked {
  background: linear-gradient(135deg, transparent 45%, #ddd 45% 60%, transparent 60%);
}
.cut input[type="text"] {
  width: 36px;
  height: 14px;
  padding: 0 3px;
}
.cut .end {
  margin-left: auto;
}
.sprint {
  left: 392px;
  top: -16px;
  width: 146px;
  height: 34px;
}
.speed {
  left: 730px;
  top: -12px;
  width: 194px;
  height: 51px;
  display: block;
}
.speed div {
  gap: 5px;
}
.run {
  left: 1027px;
  top: -16px;
  width: 141px;
  height: 34px;
}
.crumbs {
  position: absolute;
  inset: 0 0 auto;
  display: flex;
  align-items: center;
  height: 52px;
  padding: 0 7px 2px 9px;
  background: rgba(22,22,22,.7);
  color: #999;
  font-size: 24px;
}
.crumbs .line {
  width: 1px;
  height: 46px;
  margin: 0 15px 0 7px;
  background: #888;
}
.crumbs button {
  display: flex;
}
.crumbs .line + button {
  margin-right: 31px;
}
.crumbs .line + svg {
  margin-right: 18px;
}
.crumbs button + .line {
  margin-right: 14px;
}
.crumbs button:nth-of-type(3) {
  margin-right: 11px;
}
.crumbs a {
  color: #999;
  text-decoration: none;
}
.crumbs a + svg {
  margin: 0 8px;
}
.crumbs strong {
  margin-left: auto;
  color: #4c4c4c;
  font-size: 26px;
}

/* compiler results */
.results {
  height: 29px;
  margin-top: 6px;
}
.output {
  flex: none;
  padding: 7px;
}
.log {
  min-height: 103px;
  padding: 5px 12px;
  background: #222;
  color: #8c8c8c;
  font: 15px "DejaVu Sans Mono", "Noto Sans CJK KR", monospace;
  line-height: 20px;
  list-style: none;
}
.log li {
  display: flex;
  align-items: center;
  gap: 16px;
}
.log li::before {
  content: "";
  width: 5px;
  height: 5px;
  border-radius: 50%;
  background: #6cbcf4;
}
.clear {
  display: block;
  margin: 11px 8px 9px auto;
}
```
